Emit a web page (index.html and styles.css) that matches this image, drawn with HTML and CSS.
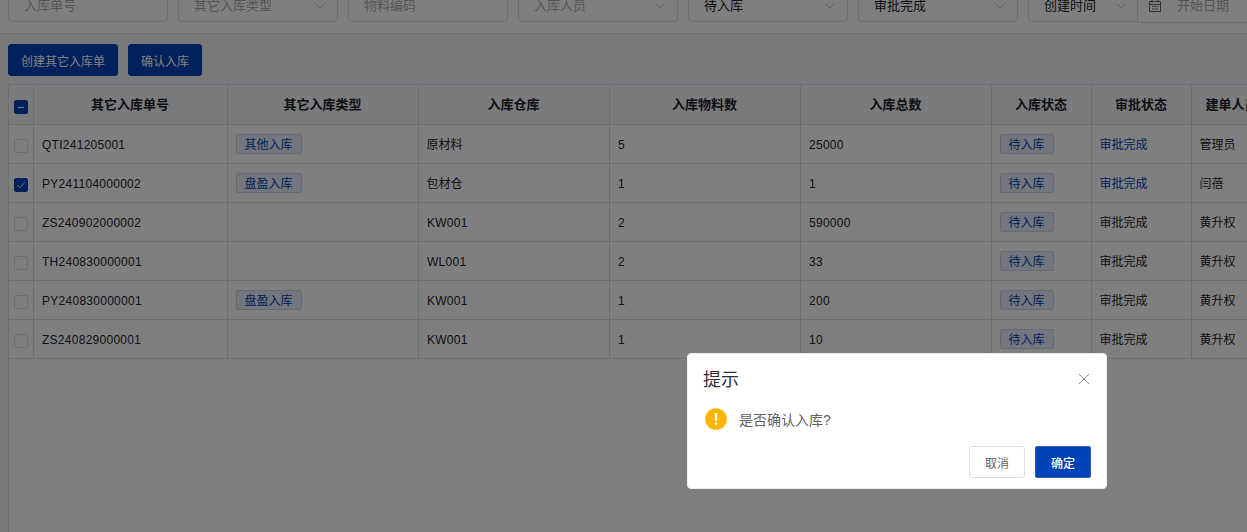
FILE: index.html
```html
<!DOCTYPE html>
<html lang="zh">
<head>
<meta charset="utf-8">
<title>其它入库</title>
<link rel="stylesheet" href="styles.css">
</head>
<body>
<div class="page">
  <div class="filters">
    <div class="field"><span class="ph">入库单号</span></div>
    <div class="field"><span class="ph">其它入库类型</span><svg class="chev" viewBox="0 0 10 6"><path d="M.5.5L5 5 9.500.5"/></svg></div>
    <div class="field"><span class="ph">物料编码</span></div>
    <div class="field"><span class="ph">入库人员</span><svg class="chev" viewBox="0 0 10 6"><path d="M.5.5L5 5 9.500.5"/></svg></div>
    <div class="field"><span class="val">待入库</span><svg class="chev" viewBox="0 0 10 6"><path d="M.5.5L5 5 9.500.5"/></svg></div>
    <div class="field"><span class="val">审批完成</span><svg class="chev" viewBox="0 0 10 6"><path d="M.5.5L5 5 9.500.5"/></svg></div>
    <div class="field field-short"><span class="val">创建时间</span><svg class="chev" viewBox="0 0 10 6"><path d="M.5.5L5 5 9.500.5"/></svg></div>
    <div class="field-date">
      <svg class="cal" viewBox="0 0 14 14"><path d="M1.500 2.500h11v10h-11zM1.500 5.500h11M4 1v2.500M10 1v2.500"/><path d="M4 7.500h1.500M6.300 7.500h1.500M8.600 7.500h1.500M4 9.800h1.500M6.300 9.800h1.500M8.600 9.800h1.500"/></svg>
      <span class="ph">开始日期</span>
    </div>
  </div>
  <div class="content">
    <div class="actions">
      <button class="btn btn-primary">创建其它入库单</button>
      <button class="btn btn-primary">确认入库</button>
    </div>
    <div class="table-area">
      <table class="grid">
        <colgroup>
          <col class="c0"><col class="c1"><col class="c2"><col class="c3"><col class="c4"><col class="c5"><col class="c6"><col class="c7"><col class="c8">
        </colgroup>
        <thead>
          <tr>
            <th><span class="check check-on"><span class="dash"></span></span></th>
            <th>其它入库单号</th><th>其它入库类型</th><th>入库仓库</th><th>入库物料数</th><th>入库总数</th><th>入库状态</th><th>审批状态</th><th class="clip">建单人员</th>
          </tr>
        </thead>
        <tbody>
          <tr><td class="cc"><span class="check"></span></td><td class="num">QTI241205001</td><td><span class="tag">其他入库</span></td><td>原材料</td><td class="num">5</td><td class="num">25000</td><td><span class="tag">待入库</span></td><td class="link">审批完成</td><td>管理员</td></tr>
          <tr><td class="cc"><span class="check check-on"><svg viewBox="0 0 14 14"><path d="M3.200 7.200l2.600 2.600 5-5.200"/></svg></span></td><td class="num">PY241104000002</td><td><span class="tag">盘盈入库</span></td><td>包材仓</td><td class="num">1</td><td class="num">1</td><td><span class="tag">待入库</span></td><td class="link">审批完成</td><td>闫蓓</td></tr>
          <tr><td class="cc"><span class="check"></span></td><td class="num">ZS240902000002</td><td></td><td class="num">KW001</td><td class="num">2</td><td class="num">590000</td><td><span class="tag">待入库</span></td><td>审批完成</td><td>黄升权</td></tr>
          <tr><td class="cc"><span class="check"></span></td><td class="num">TH240830000001</td><td></td><td class="num">WL001</td><td class="num">2</td><td class="num">33</td><td><span class="tag">待入库</span></td><td>审批完成</td><td>黄升权</td></tr>
          <tr><td class="cc"><span class="check"></span></td><td class="num">PY240830000001</td><td><span class="tag">盘盈入库</span></td><td class="num">KW001</td><td class="num">1</td><td class="num">200</td><td><span class="tag">待入库</span></td><td>审批完成</td><td>黄升权</td></tr>
          <tr><td class="cc"><span class="check"></span></td><td class="num">ZS240829000001</td><td></td><td class="num">KW001</td><td class="num">1</td><td class="num">10</td><td><span class="tag">待入库</span></td><td>审批完成</td><td>黄升权</td></tr>
        </tbody>
      </table>
    </div>
  </div>
</div>
<div class="mask"></div>
<div class="dialog">
  <div class="dialog-head">
    <span class="dialog-title">提示</span>
    <svg class="close" viewBox="0 0 12 12"><path d="M1 1l10 10M11 1L1 11"/></svg>
  </div>
  <div class="dialog-body">
    <svg class="warn" viewBox="0 0 22 22"><circle cx="11" cy="11" r="10.800"/><rect x="9.800" y="5" width="2.400" height="8" rx="1.100"/><circle cx="11" cy="15.800" r="1.400"/></svg>
    <span class="dialog-msg">是否确认入库?</span>
  </div>
  <div class="dialog-foot">
    <button class="btn btn-plain">取消</button>
    <button class="btn btn-ok">确定</button>
  </div>
</div>
</body>
</html>
```

FILE: styles.css
```css
* { box-sizing: border-box; }
html, body { margin: 0; height: 100%; overflow: hidden; }
body {
  font-family: "Liberation Sans", "Noto Sans CJK SC", sans-serif;
  font-size: 12px;
  color: #1d2129;
  background: #f0f2f5;
}
.page { height: 532px; overflow: hidden; display: flex; flex-direction: column; }
.filters {
  display: flex;
  gap: 10px;
  flex: none;
  height: 34px;
  padding-left: 8px;
  background: #fff;
  border-bottom: 1px solid #e4e7ed;
  overflow: hidden;
  white-space: nowrap;
}
.field {
  flex: none;
  width: 160px;
  height: 33px;
  margin-top: -11px;
  padding: 0 12px 0 15px;
  display: flex;
  align-items: center;
  justify-content: space-between;
  border: 1px solid #dcdfe6;
  border-radius: 4px;
  background: #fff;
  font-size: 13px;
  line-height: 18px;
}
.field-short { width: 109px; padding-right: 11px; border-radius: 4px 0 0 4px; border-right: 0; }
.ph { color: #a8abb2; }
.val { color: #1d2129; }
.chev { width: 10px; height: 6px; fill: none; stroke: #c0c4cc; stroke-width: 1; flex: none; margin-top: 1px; }
.field-date {
  flex: none;
  margin-left: -10px;
  height: 23px;
  width: 200px;
  display: flex;
  align-items: center;
  gap: 15px;
  padding: 0 0 10px 10px;
  border-left: 1px solid #dcdfe6;
  border-bottom: 1px solid #dcdfe6;
  font-size: 13px;
  line-height: 18px;
}
.cal { width: 14px; height: 14px; fill: none; stroke: #606266; stroke-width: 1; }
.content { flex: 1; display: flex; flex-direction: column; padding-top: 10px; min-height: 0; }
.actions { display: flex; gap: 10px; padding-left: 8px; flex: none; height: 40px; }
.btn {
  font-family: inherit;
  font-size: 12px;
  height: 32px;
  padding: 0 12px;
  border-radius: 3px;
  border: 1px solid transparent;
}
.btn-primary { background: #0042b8; border-color: #0042b8; color: #fff; }
.table-area { flex: 1; margin-left: 8px; border-left: 1px solid #dcdfe6; background: #fff; overflow: hidden; }
.grid { border-collapse: collapse; table-layout: fixed; width: 1238px; color: #1d2129; line-height: 16px; }
.c0 { width: 24px; } .c1 { width: 194px; } .c2 { width: 191px; } .c3 { width: 191px; }
.c4 { width: 191px; } .c5 { width: 191px; } .c6 { width: 100px; } .c7 { width: 100px; } .c8 { width: 56px; }
.grid th, .grid td { border: 1px solid #dcdfe6; padding: 2px 8px 0; white-space: nowrap; overflow: hidden; }
.grid td:has(> .tag) { padding-top: 0; }
.grid th { height: 40px; padding-top: 0; background: #f5f7fa; font-size: 13px; font-weight: 700; color: #1d2129; text-align: center; }
.grid .cc { padding: 2px 0 0; text-align: center; }
.grid th:first-child { padding: 4px 0 0; text-align: center; }
.grid td { height: 39px; }
.grid tr > :first-child { border-left: 0; }
.grid .num { letter-spacing: .27px; padding-left: 8.500px; }
.clip { padding: 0 0 0 14px !important; text-align: left !important; }
.check {
  display: inline-flex;
  align-items: center;
  justify-content: center;
  width: 14px;
  height: 14px;
  border: 1px solid #dcdfe6;
  border-radius: 2px;
  background: #fff;
  vertical-align: middle;
}
.check-on { background: #0042b8; border-color: #0042b8; }
.check svg { width: 14px; height: 14px; fill: none; stroke: #e8ecf4; stroke-width: 1; flex: none; }
.dash { width: 6px; height: 1px; background: #fff; }
.tag {
  display: inline-block;
  height: 20px;
  line-height: 20px;
  padding: 0 8px;
  border: 1px solid #c8d4ee;
  border-radius: 2px;
  background: #e6ecf8;
  color: #0042b8;
  font-size: 12px;
  vertical-align: middle;
}
.link { color: #0042b8; }
.mask { position: fixed; inset: 0; background: rgba(0, 0, 0, .5); }
.dialog {
  position: fixed;
  left: 687px;
  top: 353px;
  width: 420px;
  height: 136px;
  background: #fff;
  border-radius: 4px;
  border: 1px solid #ebeef5;
  padding: 0 15px;
  display: flex;
  flex-direction: column;
  color: #606266;
}
.dialog-head { display: flex; justify-content: space-between; align-items: center; height: 50px; flex: none; line-height: 24px; }
.dialog-title { font-size: 18px; color: #303133; padding-top: 2px; }
.close { width: 12px; height: 12px; fill: none; stroke: #909399; stroke-width: 1; margin-right: 1px; }
.dialog-body { display: flex; align-items: center; gap: 12px; padding-left: 2px; height: 30px; flex: none; }
.warn { width: 22px; height: 22px; flex: none; }
.warn circle:first-child { fill: #ffb400; }
.warn rect, .warn circle:last-child { fill: #fff; }
.dialog-msg { font-size: 14px; line-height: 20px; padding-top: 1px; }
.dialog-foot { display: flex; justify-content: flex-end; gap: 10px; margin-top: 12px; }
.btn-plain { width: 56px; padding: 0; background: #fff; border-color: #dcdfe6; color: #606266; }
.btn-ok { width: 56px; padding: 0; background: #0042b8; border-color: #2a5cc0; color: #fff; font-weight: 500; border-radius: 2px; }
```
